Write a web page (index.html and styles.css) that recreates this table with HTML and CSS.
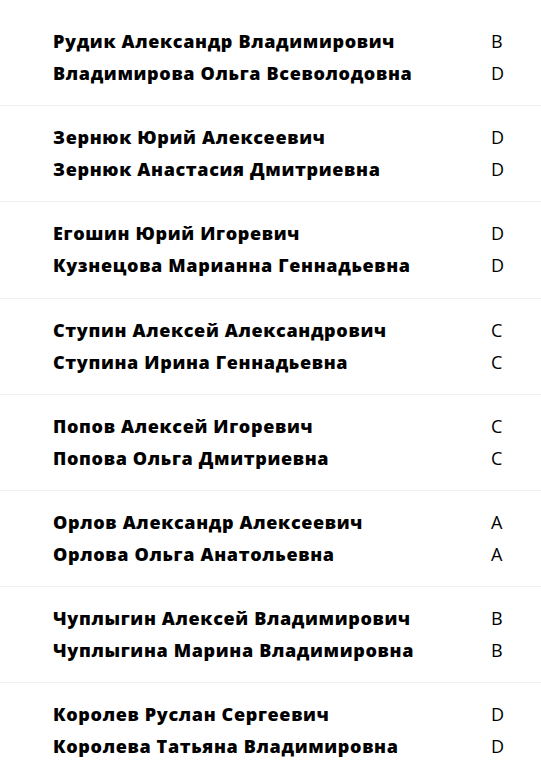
FILE: index.html
```html
<!DOCTYPE html>
<html lang="ru">
<head>
<meta charset="utf-8">
<link rel="stylesheet" href="styles.css">
</head>
<body>
<div class="list">
  <div class="pair">
    <div class="row"><span class="name">Рудик Александр Владимирович</span><span class="cls">B</span></div>
    <div class="row"><span class="name">Владимирова Ольга Всеволодовна</span><span class="cls">D</span></div>
  </div>
  <div class="pair">
    <div class="row"><span class="name">Зернюк Юрий Алексеевич</span><span class="cls">D</span></div>
    <div class="row"><span class="name">Зернюк Анастасия Дмитриевна</span><span class="cls">D</span></div>
  </div>
  <div class="pair">
    <div class="row"><span class="name">Егошин Юрий Игоревич</span><span class="cls">D</span></div>
    <div class="row"><span class="name">Кузнецова Марианна Геннадьевна</span><span class="cls">D</span></div>
  </div>
  <div class="pair">
    <div class="row"><span class="name">Ступин Алексей Александрович</span><span class="cls">C</span></div>
    <div class="row"><span class="name">Ступина Ирина Геннадьевна</span><span class="cls">C</span></div>
  </div>
  <div class="pair">
    <div class="row"><span class="name">Попов Алексей Игоревич</span><span class="cls">C</span></div>
    <div class="row"><span class="name">Попова Ольга Дмитриевна</span><span class="cls">C</span></div>
  </div>
  <div class="pair">
    <div class="row"><span class="name">Орлов Александр Алексеевич</span><span class="cls">A</span></div>
    <div class="row"><span class="name">Орлова Ольга Анатольевна</span><span class="cls">A</span></div>
  </div>
  <div class="pair">
    <div class="row"><span class="name">Чуплыгин Алексей Владимирович</span><span class="cls">B</span></div>
    <div class="row"><span class="name">Чуплыгина Марина Владимировна</span><span class="cls">B</span></div>
  </div>
  <div class="pair">
    <div class="row"><span class="name">Королев Руслан Сергеевич</span><span class="cls">D</span></div>
    <div class="row"><span class="name">Королева Татьяна Владимировна</span><span class="cls">D</span></div>
  </div>
</div>
</body>
</html>
```
FILE: styles.css
```css
html, body {
  margin: 0;
  padding: 0;
  background: #fff;
}
body {
  font-family: "Open Sans", "Noto Sans", sans-serif;
  color: #000;
  font-size: 18px;
}
.list {
  padding-top: 10px;
}
.pair {
  padding: 15px 0 16.2px 53px;
  border-bottom: 1px solid #f0f0f0;
}
.row {
  display: flex;
  height: 32px;
  align-items: center;
}
.name {
  font-weight: 800;
  letter-spacing: 0.65px;
  width: 438px;
  flex: none;
}
.cls {
  font-weight: 400;
}
```
